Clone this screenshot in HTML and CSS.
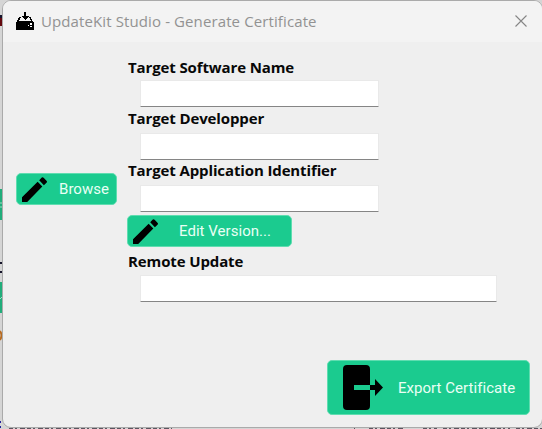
FILE: index.html
```
<!DOCTYPE html>
<html lang="en">
<head>
<meta charset="utf-8">
<title>UpdateKit Studio - Generate Certificate</title>
<link rel="stylesheet" href="styles.css">
</head>
<body>
<svg class="backdrop" viewBox="0 0 542 429" aria-hidden="true">
  <path fill="#16152d" d="M0 15h3v3H0z"/><path fill="#64080e" d="M0 18h3v8H0z"/>
  <path fill="#21ad7b" d="M0 189h3v31H0zM0 282h3v31H0z"/>
  <path stroke="#9adfc5" d="M0 203h2M0 207h2M0 299l3-3"/>
  <path stroke="#15142a" stroke-width="2" d="M0 263h2M0 272h2"/>
  <path stroke="#b86b20" stroke-width="2" d="M0 331q3 4 0 9"/>
  <path stroke="#23209a" stroke-width="2" d="M0 422h1M0 427h1"/>
  <path stroke="#5a5560" stroke-dasharray="4 2 2 3 5 2" d="M9 428.5h163M354 428.5h1M369 428.5h34M423 428.5h14M443 428.5h67M516 428.5h26"/>
</svg>
<main class="window">
  <header class="titlebar">
    <svg class="app-icon" viewBox="0 0 18 18" shape-rendering="crispEdges"><path d="M8 0h2v4h3L9 8 5 4h3zM3 5h2v1H4v2H3v1h12V8h-1V6h-1V5h2v2h1v2h1v1h1v8H0v-8h1V8h1V6h1z"/><path fill="#fff" d="M12 13h1v1h-1zM14 11h2v2h-2zM14 14h2v1h-2z"/></svg>
    <span class="caption">UpdateKit Studio - Generate Certificate</span>
    <svg class="close" viewBox="0 0 12 12"><path d="M.5.5l11 11M11.5.5l-11 11"/></svg>
  </header>
  <div class="content">
    <button class="btn browse"><svg class="pencil" viewBox="0 0 24 24"><path d="M0 19.5 15 4.5 19.5 9 5 24H0zM16.5 3 19 .5Q20 0 21 1l2.5 2.5Q24.500 4.500 23.500 5.500L21 7.800z"/></svg><span>Browse</span></button>
    <form class="form">
      <label class="name">Target Software Name</label><input>
      <label class="dev">Target Developper</label><input>
      <label class="ident">Target Application Identifier</label><input>
      <button type="button" class="btn edit"><svg class="pencil" viewBox="0 0 24 24"><path d="M0 19.500 15 4.500 19.500 9 5 24H0zM16.500 3 19 .5Q20 0 21 1l2.500 2.500Q24.500 4.500 23.500 5.500L21 7.800z"/></svg><span>Edit Version...</span></button>
      <label class="remote">Remote Update</label><input class="wide">
    </form>
  </div>
  <footer class="footer">
    <button class="btn export"><svg class="door" viewBox="0 0 40 46"><path d="M4 0h19q4 0 4 4v16H11v5h16v16q0 4-4 4H4q-4 0-4-4V4q0-4 4-4zM27 20h5v-6l8 8.500-8 8.500v-6h-5z"/></svg><span>Export Certificate</span></button>
  </footer>
</main>
</body>
</html>
```
FILE: styles.css
```
* { box-sizing: border-box; }
body {
  margin: 0;
  width: 542px;
  height: 429px;
  overflow: hidden;
  background: #d5d5d5;
  font-family: "Open Sans", "Noto Sans", sans-serif;
}
.backdrop { position: absolute; inset: 0; width: 542px; height: 429px; fill: none; }
.window {
  position: relative;
  margin-left: 2px;
  width: 541px;
  height: 428px;
  display: flex;
  flex-direction: column;
  background: #efefef;
  border: 1px solid #aaa;
  border-radius: 9px;
  overflow: hidden;
}
.titlebar {
  display: flex;
  align-items: center;
  height: 41px;
  flex: none;
  padding: 0 15px 2px 13px;
  background: #f3f3f3;
}
.app-icon { width: 18px; height: 18px; margin-right: 7px; }
.caption { color: #929292; font-size: 15px; line-height: 20px; letter-spacing: .11px; white-space: nowrap; }
.close { width: 12px; height: 12px; margin-left: auto; fill: none; stroke: #858585; stroke-width: 1.1; }
.content { display: flex; align-items: flex-start; padding-left: 13px; }
.btn {
  display: flex;
  align-items: center;
  padding: 0;
  border: 1px solid #5fddb0;
  border-radius: 5px;
  background: #1bcb8f;
  color: #e9fff5;
  font: 15px/20px Roboto, "Liberation Sans", sans-serif;
  letter-spacing: .04px;
  white-space: nowrap;
}
.btn svg { flex: none; fill: #000; }
.browse { width: 101px; height: 32px; margin: 131px 10px 0 0; }
.pencil { width: 25px; height: 25px; margin-left: 5px; }
.browse span { margin-left: 12px; }
.form { display: flex; flex-direction: column; padding-top: 15px; }
.form label {
  align-self: flex-start;
  height: 23px;
  padding-left: 1px;
  color: #080808;
  font-size: 15px;
  font-weight: 700;
  line-height: 20px;
  letter-spacing: -.12px;
  white-space: nowrap;
}
.form input {
  width: 239px;
  height: 27px;
  margin: 0 0 2px 13px;
  padding: 0 4px;
  border: 1px solid #e9e9e9;
  border-bottom: 1px solid #858585;
  border-radius: 1px;
  background: #fff;
}
.form .dev { height: 24px; line-height: 18px; }
.form .ident { line-height: 16px; }
.form .remote { line-height: 18px; }
.form .edit { width: 165px; height: 32px; margin: 1px 0 5px; }
.edit span { margin-left: 21px; }
.form .wide { width: 357px; }
.footer { display: flex; justify-content: flex-end; margin-top: auto; padding: 0 12px 12px 0; }
.export { width: 203px; height: 55px; }
.door { width: 40px; height: 46px; margin-left: 15px; }
.export span { margin-left: 15px; }
```
